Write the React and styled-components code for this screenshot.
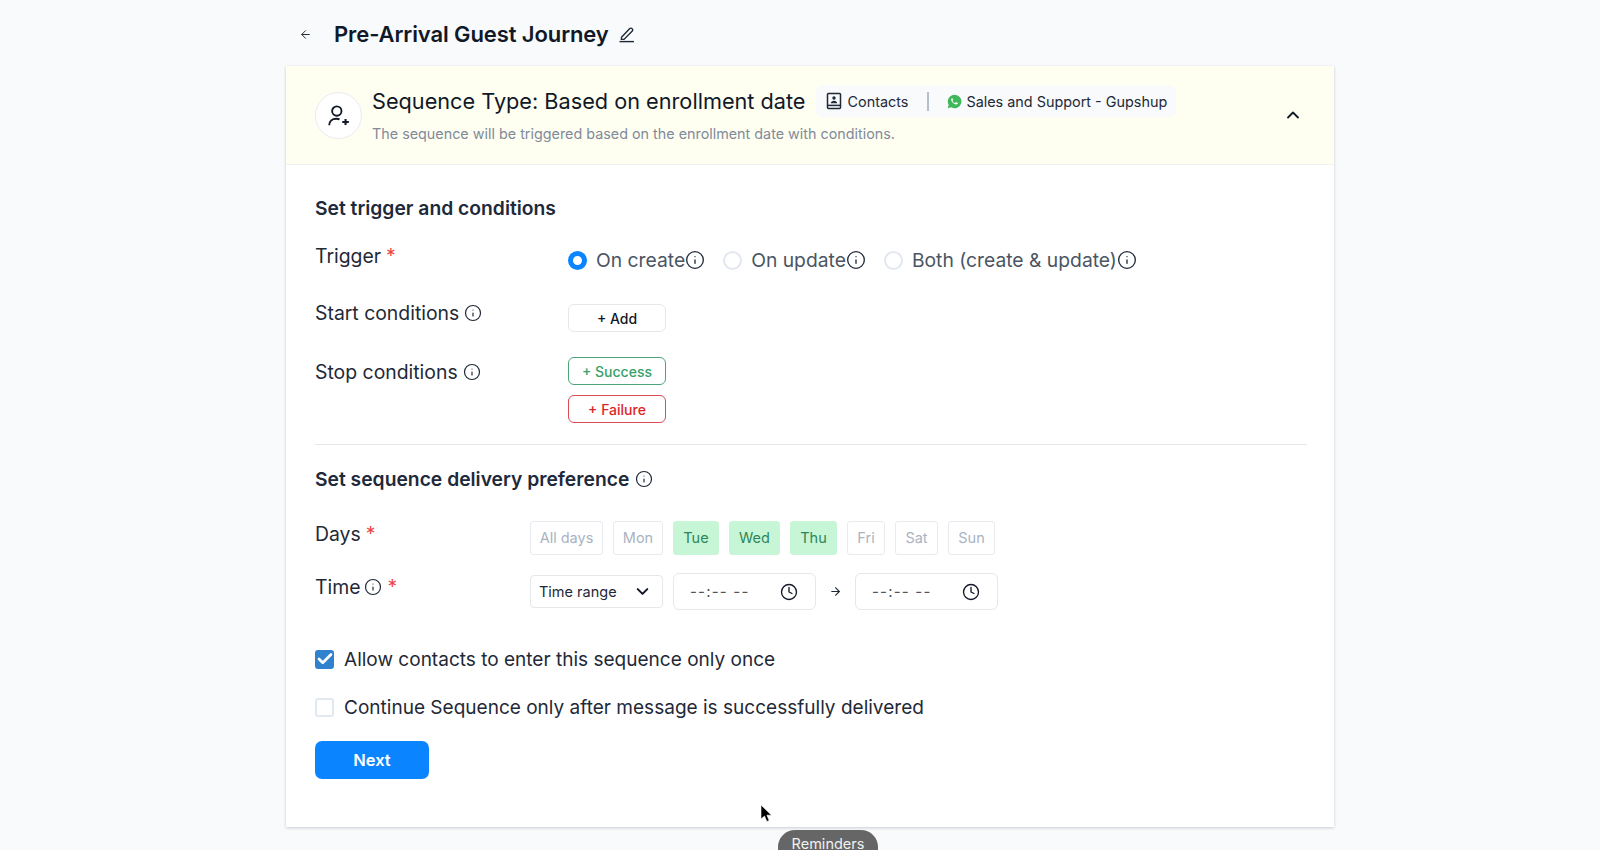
import React from "react";
import styled, { createGlobalStyle } from "styled-components";
import { ArrowLeft, ArrowRight, ChevronDown, ChevronUp, Clock, Info, Check } from "lucide-react";

const Global = createGlobalStyle`
  html, body { margin: 0; padding: 0; height: 850px; overflow: hidden; background: #f8fafc; }
  body { font-family: Inter, "Noto Sans", sans-serif; color: #111827; }
  * { box-sizing: border-box; }
`;

const Page = styled.div`
  position: relative; width: 1600px; height: 850px; padding-left: 286px; overflow: hidden;
`;
const TopBar = styled.div`
  display: flex; align-items: center; height: 66px; width: 1048px; padding: 2px 0 0 13px;
`;
const BackButton = styled.span`
  display: flex; color: #1f2937; margin-right: 22px;
`;
const PageTitle = styled.h1`
  margin: 0 9px 0 0; font-size: 22px; line-height: 28px; font-weight: 600; color: #111827; letter-spacing: -0.1px;
`;
const EditIcon = styled.svg`
  width: 18px; height: 18px; fill: none; stroke: #1f2937; stroke-width: 1.4;
`;
const Card = styled.div`
  width: 1048px; height: 761px; background: #fff; box-shadow: 0 1px 3px rgba(15, 23, 42, 0.2);
`;
const Header = styled.div`
  display: flex; align-items: flex-start; height: 99px; padding: 19px 0 0 29px;
  background: #fffff1; border-bottom: 1px solid #eef1f4;
`;
const Avatar = styled.div`
  width: 47px; height: 47px; margin: 7px 10px 0 0; flex: none; border-radius: 50%; background: #fff; border: 1px solid #e9ebef;
  display: flex; align-items: center; justify-content: center;
`;
const HeaderText = styled.div`
  width: 880px; flex: none;
`;
const HeaderTop = styled.div`
  display: flex; align-items: center; height: 32px;
`;
const SeqTitle = styled.div`
  font-size: 21.7px; line-height: 32px; color: #111827; margin-right: 10px; white-space: nowrap;
`;
const Chip = styled.div`
  display: flex; align-items: center; height: 32px; padding: 0 9px 0 10px; background: #f8fafc; border-radius: 6px;
  font-size: 14.4px; color: #1f2937; white-space: nowrap;
`;
const ChipIcon = styled.svg`
  width: 16px; height: 18px; margin-right: 6px; flex: none;
`;
const ChipDivider = styled.span`
  width: 2px; height: 19px; background: #b6bfcb; margin: 0 18px 0 19px;
`;
const WaIcon = styled.svg`
  width: 15px; height: 15px; margin-right: 4px; flex: none;
`;
const SeqSub = styled.div`
  font-size: 14.35px; line-height: 20px; color: #7f8a9b; margin-top: 7px; white-space: nowrap;
`;
const Collapse = styled.span`
  display: flex; margin: 20px 0 0 31px; color: #111827;
`;
const Body = styled.div`
  padding: 0 27px 0 29px;
`;
const SectionTitle = styled.h2`
  display: flex; align-items: center; gap: 6px; margin: ${p => p.$top}px 0 0; height: 24px; font-size: 19.3px; line-height: 24px; font-weight: 600; color: #1e293b;
`;
const Row = styled.div`
  display: flex; align-items: flex-start; margin-top: ${p => p.$top}px;
`;
const Label = styled.div`
  display: flex; align-items: center; gap: ${p => p.$gap || 5}px; width: ${p => p.$w}px; flex: none; height: 24px; margin-top: ${p => p.$shift || 0}px;
  font-size: 19.4px; line-height: 24px; color: #1f2937;
`;
const Star = styled.span`
  color: #ef4444; margin-left: ${p => p.$ml ?? 0}px;
`;
const RadioGroup = styled.div`
  display: flex; align-items: center; height: 24px; margin-top: 4px;
`;
const Radio = styled.span`
  width: 19px; height: 19px; margin-right: 9px; flex: none; border-radius: 50%;
  background: #fff; border: ${p => (p.$on ? "5px solid #0a84ff" : "2px solid #e2e8f0")};
`;
const RadioLabel = styled.span`
  display: flex; align-items: center; font-size: 19.3px; color: #4b5563; margin-right: ${p => p.$mr}px; white-space: nowrap;
`;
const ButtonStack = styled.div`
  display: flex; flex-direction: column; gap: 10px;
`;
const tones = {
  neutral: { c: "#111827", b: "#e5e7eb" },
  green: { c: "#38a169", b: "#4aa678" },
  red: { c: "#dc2626", b: "#dc4a55" },
};
const OutlineButton = styled.button`
  width: 98px; height: 28px; padding: 0; background: #fff; border-radius: 6px;
  border: 1px solid ${p => tones[p.$tone].b}; color: ${p => tones[p.$tone].c};
  font: 500 14px Inter, sans-serif;
`;
const Divider = styled.div`
  height: 1px; background: #e5e7eb; margin-top: 21px;
`;
const DayRow = styled.div`
  display: flex; gap: 10px;
`;
const Day = styled.span`
  display: flex; align-items: center; justify-content: center; height: 34px; width: ${p => p.$w}px; padding-bottom: 1px; border-radius: 3px;
  font-size: 14.5px; border: 1px solid ${p => (p.$on ? "#c6f6d5" : "#e8ebf0")};
  background: ${p => (p.$on ? "#c6f6d5" : "#fff")}; color: ${p => (p.$on ? "#2f855a" : "#a9b3c2")};
`;
const TimeRow = styled.div`
  display: flex; align-items: center; height: 37px;
`;
const Select = styled.div`
  display: flex; align-items: center; justify-content: space-between; width: 133px; height: 33px; padding: 0 10px 0 8px; margin-right: 10px;
  border: 1px solid #e5e7eb; border-radius: 4px; font-size: 14.5px; color: #1f2937;
`;
const TimeInput = styled.div`
  display: flex; align-items: center; justify-content: space-between; width: 143px; height: 37px; padding: 0 17px 0 16px;
  border: 1px solid #e5e7eb; border-radius: 6px; font-size: 15px; color: #4b5563; letter-spacing: 1.2px;
`;
const ArrowWrap = styled.span`
  display: flex; justify-content: center; width: 39px; color: #1f2937;
`;
const CheckRow = styled.div`
  display: flex; align-items: center; gap: 10px; height: 24px; margin-top: ${p => p.$top}px; font-size: 19.05px; color: #1f2937; white-space: nowrap;
`;
const Box = styled.span`
  display: flex; align-items: center; justify-content: center; width: 19px; height: 19px; border-radius: 3px; flex: none;
  background: ${p => (p.$on ? "#3182ce" : "#fff")}; border: ${p => (p.$on ? "none" : "2px solid #e2e8f0")}; color: #fff;
`;
const NextButton = styled.button`
  display: block; width: 114px; height: 38px; margin-top: 22px; border: 0; border-radius: 7px; background: #0a84ff; color: #fff;
  font: 600 16.5px Inter, sans-serif;
`;
const Pill = styled.div`
  position: absolute; left: 778px; top: 830px; width: 100px; height: 34px; padding-top: 5px; border-radius: 17px 17px 0 0; background: #666;
  color: #f1f1f1; font-size: 14.5px; text-align: center;
`;
const Cursor = styled.svg`
  position: absolute; left: 760px; top: 804px; width: 14px; height: 20px;
`;

const InfoIcon = ({ size = 18 }) => <Info size={size} strokeWidth={1.6} color="#1f2937" />;

export default function App() {
  return (
    <Page>
      <Global />
      <TopBar>
        <BackButton><ArrowLeft size={13} strokeWidth={1.8} /></BackButton>
        <PageTitle>Pre-Arrival Guest Journey</PageTitle>
        <EditIcon viewBox="0 0 18 18">
          <path d="M3.5 12.2 11.8 3.6a1.5 1.5 0 0 1 2.2 0l.3.3a1.5 1.5 0 0 1 0 2.1L6 14.4H3.4z" />
          <path d="M1.5 16.6h14.5" />
        </EditIcon>
      </TopBar>
      <Card>
        <Header>
          <Avatar>
            <svg width="24" height="24" viewBox="0 0 22 22" fill="none" stroke="#111827" strokeWidth="1.7">
              <circle cx="9" cy="6.5" r="4.3" />
              <path d="M2 19.500c0-3.600 2.800-6 6.500-6 1.200 0 2.200.2 3 .6" />
              <path d="M14 16.500h6M17 13.700v5.600" strokeWidth="1.9" />
            </svg>
          </Avatar>
          <HeaderText>
            <HeaderTop>
              <SeqTitle>Sequence Type: Based on enrollment date</SeqTitle>
              <Chip>
                <ChipIcon viewBox="0 0 16 18" fill="none" stroke="#1f2937" strokeWidth="1.5">
                  <rect x="1.5" y="1.5" width="13" height="15" rx="1" />
                  <path d="M1.5 13.4h13" />
                  <circle cx="8" cy="6" r="1.7" fill="#1f2937" stroke="none" />
                  <path d="M4.8 11.2c0-3.4 6.4-3.4 6.4 0z" fill="#1f2937" stroke="none" />
                </ChipIcon>
                Contacts
                <ChipDivider />
                <WaIcon viewBox="0 0 16 16">
                  <path d="M8 .8a7.2 7.2 0 0 0-6.2 10.8L.8 15.2l3.7-1A7.2 7.2 0 1 0 8 .8z" fill="#3fb85a" />
                  <path d="M5.6 4.3c-.3 0-.8.4-1 1-.3 1 .2 2.400 1.400 3.800 1.300 1.400 2.800 2.200 4 2.100.8-.1 1.400-.7 1.500-1.300 0-.3 0-.4-.2-.5l-1.500-.7c-.2-.1-.4 0-.5.1l-.6.8c-.1.100-.3.200-.5.100-1-.4-1.900-1.200-2.400-2.200-.1-.2 0-.3.100-.4l.5-.6c.1-.2.100-.3 0-.5l-.6-1.400c-.1-.3-.3-.3-.5-.3z" fill="#fff" />
                </WaIcon>
                Sales and Support - Gupshup
              </Chip>
            </HeaderTop>
            <SeqSub>The sequence will be triggered based on the enrollment date with conditions.</SeqSub>
          </HeaderText>
          <Collapse><ChevronUp size={20} strokeWidth={2.2} /></Collapse>
        </Header>
        <Body>
          <SectionTitle $top={31}>Set trigger and conditions</SectionTitle>
          <Row $top={24}>
            <Label $w={253}>Trigger <Star>*</Star></Label>
            <RadioGroup>
              <Radio $on />
              <RadioLabel $mr={18}>On create<InfoIcon size={20} /></RadioLabel>
              <Radio />
              <RadioLabel $mr={18}>On update<InfoIcon size={20} /></RadioLabel>
              <Radio />
              <RadioLabel $mr={0}>Both (create &amp; update)<InfoIcon size={20} /></RadioLabel>
            </RadioGroup>
          </Row>
          <Row $top={32}>
            <Label $w={253} $shift={-3}>Start conditions <InfoIcon /></Label>
            <OutlineButton $tone="neutral">+ Add</OutlineButton>
          </Row>
          <Row $top={25}>
            <Label $w={253} $shift={3}>Stop conditions <InfoIcon /></Label>
            <ButtonStack>
              <OutlineButton $tone="green">+ Success</OutlineButton>
              <OutlineButton $tone="red">+ Failure</OutlineButton>
            </ButtonStack>
          </Row>
          <Divider />
          <SectionTitle $top={22}>Set sequence delivery preference <InfoIcon /></SectionTitle>
          <Row $top={30}>
            <Label $w={215} $shift={1}>Days <Star>*</Star></Label>
            <DayRow>
              <Day $w={73}>All days</Day>
              <Day $w={50}>Mon</Day>
              <Day $w={46} $on>Tue</Day>
              <Day $w={51} $on>Wed</Day>
              <Day $w={47} $on>Thu</Day>
              <Day $w={38}>Fri</Day>
              <Day $w={43}>Sat</Day>
              <Day $w={47}>Sun</Day>
            </DayRow>
          </Row>
          <Row $top={18}>
            <Label $w={215} $shift={2} $gap={3}>Time <InfoIcon /> <Star $ml={3}>*</Star></Label>
            <TimeRow>
              <Select>Time range <ChevronDown size={19} strokeWidth={2.6} color="#111827" /></Select>
              <TimeInput>--:-- --<Clock size={18} strokeWidth={1.8} color="#111827" /></TimeInput>
              <ArrowWrap><ArrowRight size={13} strokeWidth={2} /></ArrowWrap>
              <TimeInput>--:-- --<Clock size={18} strokeWidth={1.8} color="#111827" /></TimeInput>
            </TimeRow>
          </Row>
          <CheckRow $top={37}>
            <Box $on><Check size={18} strokeWidth={3.6} /></Box>
            Allow contacts to enter this sequence only once
          </CheckRow>
          <CheckRow $top={24}>
            <Box />
            Continue Sequence only after message is successfully delivered
          </CheckRow>
          <NextButton>Next</NextButton>
        </Body>
      </Card>
      <Cursor viewBox="0 0 14 20">
        <path d="M1 1v14l3.500-3 2.300 5.500 2.400-1-2.300-5.300H11.500z" fill="#000" stroke="#fff" strokeWidth="0.6" />
      </Cursor>
      <Pill>Reminders</Pill>
    </Page>
  );
}
